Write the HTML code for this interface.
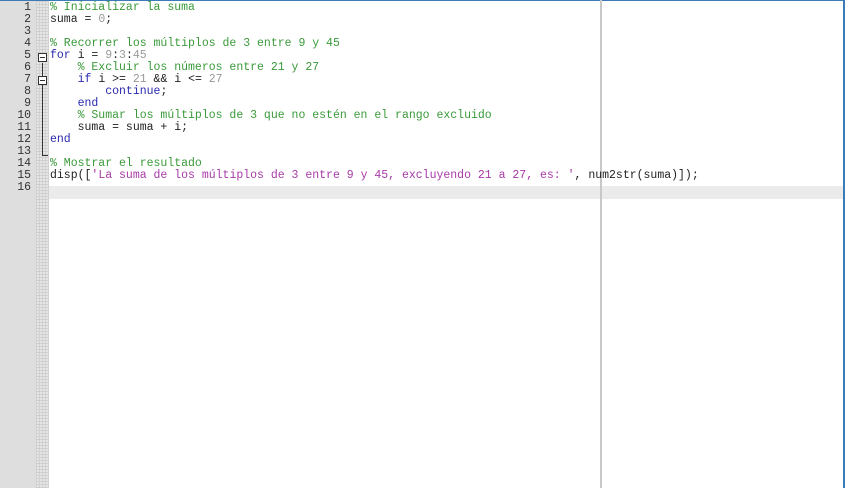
<!DOCTYPE html>
<html><head><style>
html,body{margin:0;padding:0;}
body{width:848px;height:488px;background:#fff;position:relative;overflow:hidden;font-family:"Liberation Mono",monospace;font-size:11.5px;}
.top{position:absolute;left:0;top:0;width:848px;height:1px;background:#3c7bb8;}
.rb{position:absolute;left:843px;top:0;width:2px;height:488px;background:#3c7bb8;}
.rb2{position:absolute;left:845px;top:0;width:3px;height:488px;background:#fff;}
.gut{position:absolute;left:0;top:1px;width:36px;height:487px;background:#dedede;}
.dot{position:absolute;left:36px;top:1px;width:13px;height:487px;background-color:#e6e6e6;background-image:repeating-linear-gradient(0deg,#cfcfcf 0 1px,transparent 1px 3px),repeating-linear-gradient(90deg,#d2d2d2 0 1px,transparent 1px 3px);}
.vl{position:absolute;left:600px;top:0;width:2px;height:488px;background:#c8c8c8;}
.hl{position:absolute;left:49px;top:186px;width:794px;height:13px;background:#ebebeb;}
.ln{position:absolute;left:0;width:31px;text-align:right;color:#333;}
.c{position:absolute;left:50px;white-space:pre;color:#222;}
.g{color:#3a9a3a}.b{color:#2a2ab0}.p{color:#a83aa8}.n{color:#999}
.fold{position:absolute;left:38px;width:7px;height:7px;border:1px solid #333;background:#fff;}
.fold:after{content:"";position:absolute;left:1px;top:3px;width:5px;height:1px;background:#333;}
.fl{position:absolute;left:42px;width:1px;background:#333;}
.w{position:absolute;left:0;top:1px;width:848px;height:487px;}
</style></head><body>
<div class="top"></div>
<div class="gut"></div><div class="dot"></div>
<div class="hl"></div>
<div class="vl"></div>
<div class="rb"></div><div class="rb2"></div>
<div class="w">
<div class="fl" style="top:62px;height:92px"></div>
<div class="fl" style="top:154px;width:6px;height:1px"></div>
<div class="fold" style="top:52px"></div>
<div class="fold" style="top:75px"></div>

<div class="ln" style="top:0">1</div><div class="c g" style="top:0">% Inicializar la suma</div>
<div class="ln" style="top:12px">2</div><div class="c" style="top:12px">suma = <span class="n">0</span>;</div>
<div class="ln" style="top:24px">3</div>
<div class="ln" style="top:36px">4</div><div class="c g" style="top:36px">% Recorrer los múltiplos de 3 entre 9 y 45</div>
<div class="ln" style="top:48px">5</div><div class="c" style="top:48px"><span class="b">for</span> i = <span class="n">9</span>:<span class="n">3</span>:<span class="n">45</span></div>
<div class="ln" style="top:60px">6</div><div class="c g" style="top:60px">    % Excluir los números entre 21 y 27</div>
<div class="ln" style="top:72px">7</div><div class="c" style="top:72px">    <span class="b">if</span> i &gt;= <span class="n">21</span> &amp;&amp; i &lt;= <span class="n">27</span></div>
<div class="ln" style="top:84px">8</div><div class="c" style="top:84px">        <span class="b">continue</span>;</div>
<div class="ln" style="top:96px">9</div><div class="c b" style="top:96px">    end</div>
<div class="ln" style="top:108px">10</div><div class="c g" style="top:108px">    % Sumar los múltiplos de 3 que no estén en el rango excluido</div>
<div class="ln" style="top:120px">11</div><div class="c" style="top:120px">    suma = suma + i;</div>
<div class="ln" style="top:132px">12</div><div class="c b" style="top:132px">end</div>
<div class="ln" style="top:144px">13</div>
<div class="ln" style="top:156px">14</div><div class="c g" style="top:156px">% Mostrar el resultado</div>
<div class="ln" style="top:168px">15</div><div class="c" style="top:168px">disp([<span class="p">'La suma de los múltiplos de 3 entre 9 y 45, excluyendo 21 a 27, es: '</span>, num2str(suma)]);</div>
<div class="ln" style="top:180px">16</div>
</div>
</body></html>
